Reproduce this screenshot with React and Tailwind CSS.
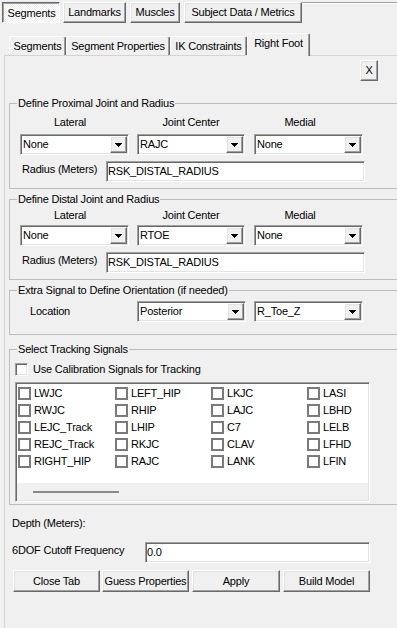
import React from "react";

const raised =
  "border border-t-white border-l-white border-r-[#696969] border-b-[#696969] shadow-[inset_-1px_-1px_#a0a0a0,inset_1px_1px_#e3e3e3] bg-[#f0f0f0]";
const sunken =
  "border border-t-[#a0a0a0] border-l-[#a0a0a0] border-r-white border-b-white shadow-[inset_1px_1px_#696969,inset_-1px_-1px_#e3e3e3] bg-white";

function Button({ className = "", children }) {
  return (
    <div className={`flex items-center justify-center whitespace-nowrap ${raised} ${className}`}>
      {children}
    </div>
  );
}

// small black dropdown triangle
function Arrow() {
  return (
    <svg width="7" height="4" viewBox="0 0 7 4" shapeRendering="crispEdges">
      <rect x="0" y="0" width="7" height="1" fill="#000" />
      <rect x="1" y="1" width="5" height="1" fill="#000" />
      <rect x="2" y="2" width="3" height="1" fill="#000" />
      <rect x="3" y="3" width="1" height="1" fill="#000" />
    </svg>
  );
}

function Combo({ value, className = "" }) {
  return (
    <div className={`flex h-[21px] p-px ${sunken} ${className}`}>
      <div className="flex-1 pl-px leading-[17px] whitespace-nowrap overflow-hidden">{value}</div>
      <div className={`w-[17px] h-[17px] flex items-center justify-center ${raised}`}>
        <Arrow />
      </div>
    </div>
  );
}

function TextBox({ value, className = "" }) {
  return (
    <div className={`h-[21px] p-px pt-[2px] leading-[14px] whitespace-nowrap ${sunken} ${className}`}>
      {value}
    </div>
  );
}

function Tab({ className = "", children }) {
  return (
    <div className={`flex flex-col ${className}`}>
      <div className="h-[19px] flex items-center justify-center whitespace-nowrap border-t border-l border-r border-t-white border-l-white border-r-[#696969] shadow-[inset_-1px_0_#a0a0a0] rounded-t-[2px]">
        {children}
      </div>
      <div className="h-px bg-[#d4d4d4]" />
    </div>
  );
}

function Group({ title, className = "", children }) {
  return (
    <fieldset className={`ml-[4px] w-[420px] border border-[#bdbdbd] ${className}`}>
      <legend className="ml-[7px] px-px leading-[13px]">{title}</legend>
      {children}
    </fieldset>
  );
}

function JointGroup({ title, lateral, center, medial, className = "", labelsTop, combosTop }) {
  return (
    <Group title={title} className={`pb-[6px] ${className}`}>
      <div className={`flex h-[13px] ${labelsTop}`}>
        <div className="ml-[10px] w-[100px] text-center">Lateral</div>
        <div className="ml-[17px] w-[108px] text-center">Joint Center</div>
        <div className="ml-[9px] w-[92px] text-center">Medial</div>
      </div>
      <div className={`flex ${combosTop}`}>
        <Combo value={lateral} className="ml-[10px] w-[109px]" />
        <Combo value={center} className="ml-[8px] w-[108px]" />
        <Combo value={medial} className="ml-[9px] w-[109px]" />
      </div>
      <div className="flex items-start mt-[6px]">
        <div className="ml-[12px] w-[84px] mt-[2px] whitespace-nowrap">Radius (Meters)</div>
        <TextBox value="RSK_DISTAL_RADIUS" className="w-[259px]" />
      </div>
    </Group>
  );
}

const signals = [
  ["LWJC", "RWJC", "LEJC_Track", "REJC_Track", "RIGHT_HIP"],
  ["LEFT_HIP", "RHIP", "LHIP", "RKJC", "RAJC"],
  ["LKJC", "LAJC", "C7", "CLAV", "LANK"],
  ["LASI", "LBHD", "LELB", "LFHD", "LFIN"],
];

export default function App() {
  return (
    <div className="w-[397px] h-[628px] overflow-hidden bg-[#f0f0f0] font-['Liberation_Sans',Arial,sans-serif] text-[11px] tracking-[-0.2px] leading-[13px] text-black">
      {/* top row of toggle buttons */}
      <div className="flex items-start pt-[2px] pl-[2px]">
        <div className="w-[58px] h-[21px] flex items-center justify-center pt-px pl-px border border-t-[#696969] border-l-[#696969] border-r-white border-b-white shadow-[inset_1px_1px_#a0a0a0] bg-[repeating-conic-gradient(#ffffff_0%_25%,#f0f0f0_0%_50%)] bg-[length:2px_2px]">
          Segments
        </div>
        <Button className="ml-[3px] w-[63px] h-[21px]">Landmarks</Button>
        <Button className="ml-[4px] w-[50px] h-[21px]">Muscles</Button>
        <Button className="ml-[4px] w-[118px] h-[21px]">Subject Data / Metrics</Button>
        <div className="flex-1 h-[2px] border-t border-b border-t-[#a0a0a0] border-b-white" />
      </div>

      {/* sub tabs */}
      <div className="mt-[10px] ml-[4px] flex items-end">
        <div className="w-[5px] h-px bg-[#d4d4d4]" />
        <Tab className="w-[57px]">Segments</Tab>
        <Tab className="w-[104px]">Segment Properties</Tab>
        <Tab className="w-[77px]">IK Constraints</Tab>
        <div className="w-[63px] h-[23px] flex justify-center pt-[3px] whitespace-nowrap border-t border-l border-r border-t-white border-l-white border-r-[#696969] shadow-[inset_-1px_0_#a0a0a0] rounded-t-[2px]">
          Right Foot
        </div>
        <div className="flex-1 h-px bg-[#d4d4d4]" />
      </div>

      {/* tab page */}
      <div className="ml-[4px] border-l border-l-[#d4d4d4] h-[600px]">
        <div className="pt-[4px] pl-[355px]">
          <Button className="w-[18px] h-[21px]">X</Button>
        </div>

        <JointGroup
          title="Define Proximal Joint and Radius"
          lateral="None"
          center="RAJC"
          medial="None"
          className="mt-[16px]"
          labelsTop="mt-[6px]"
          combosTop="mt-[5px]"
        />
        <JointGroup
          title="Define Distal Joint and Radius"
          lateral="None"
          center="RTOE"
          medial="None"
          className="mt-[4px]"
          labelsTop="mt-[3px]"
          combosTop="mt-[3px]"
        />

        <Group title="Extra Signal to Define Orientation (if needed)" className="mt-[4px] pb-[12px]">
          <div className="flex items-center mt-[4px]">
            <div className="ml-[20px] w-[107px]">Location</div>
            <Combo value="Posterior" className="w-[109px]" />
            <Combo value="R_Toe_Z" className="ml-[8px] w-[109px]" />
          </div>
        </Group>

        <Group title="Select Tracking Signals" className="mt-[8px] pb-[2px]">
          <div className="flex items-center mt-[7px] ml-[5px]">
            <div className={`w-[13px] h-[13px] ${sunken}`} />
            <span className="ml-[5px] whitespace-nowrap">Use Calibration Signals for Tracking</span>
          </div>
          <div className={`mt-[6px] ml-[5px] w-[355px] h-[120px] p-px ${sunken}`}>
            <div className="h-[99px] bg-white pt-px pl-px grid grid-flow-col grid-rows-[repeat(5,17px)] grid-cols-[97px_96px_96px_96px]">
              {signals.map((col) =>
                col.map((name) => (
                  <div key={name} className="flex items-center">
                    <div className="w-[13px] h-[13px] border-2 border-[#7a7a7a] bg-white" />
                    <span className="ml-[3px] whitespace-nowrap">{name}</span>
                  </div>
                ))
              )}
            </div>
            <div className="h-[17px] bg-[#f0f0f0] pt-[8px]">
              <div className="ml-[16px] w-[86px] h-[2px] bg-[#8a8a8a]" />
            </div>
          </div>
        </Group>

        <div className="mt-[12px] ml-[7px]">Depth (Meters):</div>

        <div className="flex items-start mt-[12px]">
          <div className="ml-[7px] w-[133px] mt-[2px] whitespace-nowrap">6DOF Cutoff Frequency</div>
          <TextBox value="0.0" className="w-[225px]" />
        </div>

        <div className="flex mt-[7px]">
          <Button className="ml-[8px] w-[87px] h-[22px]">Close Tab</Button>
          <Button className="ml-[2px] w-[87px] h-[22px]">Guess Properties</Button>
          <Button className="ml-[3px] w-[88px] h-[22px]">Apply</Button>
          <Button className="ml-[3px] w-[87px] h-[22px]">Build Model</Button>
        </div>
      </div>
    </div>
  );
}
